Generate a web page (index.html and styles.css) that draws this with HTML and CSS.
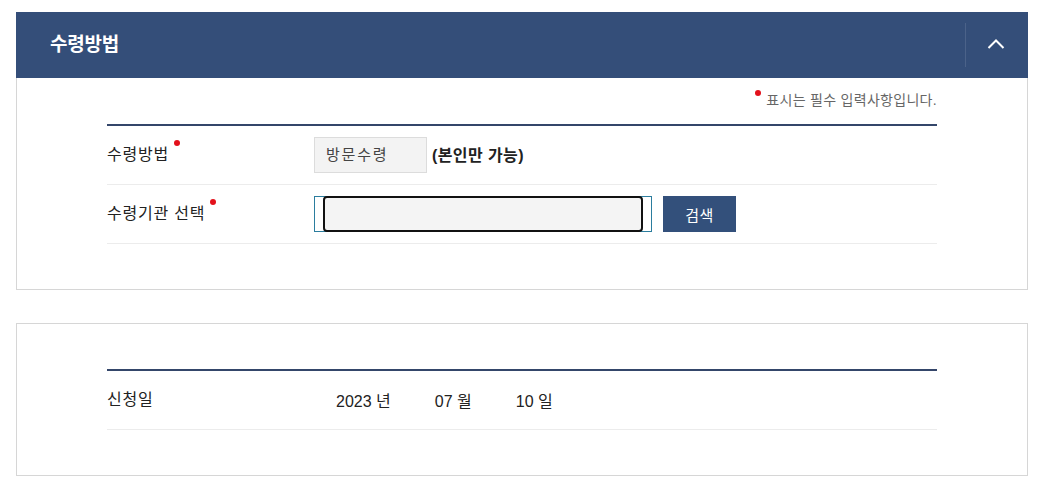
FILE: index.html
```html
<!DOCTYPE html>
<html lang="ko">
<head>
<meta charset="utf-8">
<title>수령방법</title>
<link rel="stylesheet" href="styles.css">
</head>
<body>
<div class="page">
  <section class="panel">
    <header class="panel-head">
      <h2 class="panel-title">수령방법</h2>
      <button class="toggle" type="button" aria-label="접기">
        <svg width="18" height="12" viewBox="0 0 18 12"><polyline points="1.5,10 9,2.5 16.5,10" fill="none" stroke="#fff" stroke-width="2"/></svg>
      </button>
    </header>
    <div class="panel-body body-first">
      <p class="note"><span class="req-dot"></span>표시는 필수 입력사항입니다.</p>
      <div class="form-table">
        <div class="row">
          <div class="label">수령방법<span class="req-dot sup"></span></div>
          <div class="value">
            <span class="readonly-box">방문수령</span>
            <strong class="hint">(본인만 가능)</strong>
          </div>
        </div>
        <div class="row">
          <div class="label">수령기관 선택<span class="req-dot sup"></span></div>
          <div class="value">
            <div class="input-frame"><div class="input-inner"></div></div>
            <button class="btn-search" type="button">검색</button>
          </div>
        </div>
      </div>
    </div>
  </section>

  <section class="panel panel-plain">
    <div class="panel-body body-top">
      <div class="form-table">
        <div class="row">
          <div class="label">신청일</div>
          <div class="value date">
            <span class="date-part">2023 년</span>
            <span class="date-part">07 월</span>
            <span class="date-part">10 일</span>
          </div>
        </div>
      </div>
    </div>
  </section>
</div>
</body>
</html>
```

FILE: styles.css
```css
* { box-sizing: border-box; }
html, body { margin: 0; padding: 0; background: #fff; }
body {
  font-family: "Liberation Sans", "Noto Sans CJK KR", sans-serif;
  color: #222;
}
.page {
  padding: 12px 0 0 16px;
  width: 1028px;
}
.panel { width: 1012px; }
.panel-head {
  height: 66px;
  background: #344e79;
  display: flex;
  align-items: center;
  justify-content: space-between;
  padding-left: 34px;
}
.panel-title {
  margin: 0;
  font-size: 19px;
  font-weight: 700;
  color: #fff;
  letter-spacing: -0.2px;
  line-height: 24px;
}
.toggle {
  width: 63px;
  height: 44px;
  border: 0;
  border-left: 1px solid #4b6289;
  background: transparent;
  padding: 0;
  display: flex;
  align-items: center;
  justify-content: center;
  cursor: pointer;
}
.toggle svg { display: block; margin-top: -2px; margin-left: -2px; }
.panel-body {
  border: 1px solid #d6d6d6;
  border-top: 0;
  padding: 0 90px 45px 90px;
}
.body-first { padding-top: 12px; }
.panel-plain { margin-top: 33px; }
.panel-plain .panel-body { border-top: 1px solid #d6d6d6; }
.body-top { padding-top: 45px; }
.note {
  margin: 0;
  text-align: right;
  font-size: 14px;
  line-height: 20px;
  color: #666;
  letter-spacing: 0.3px;
}
.req-dot {
  display: inline-block;
  width: 6px;
  height: 6px;
  border-radius: 50%;
  background: #e3111b;
  vertical-align: top;
  margin: 0 5px 0 0;
}
.req-dot.sup {
  margin: -4px 0 0 5px;
}
.form-table {
  margin-top: 14px;
  border-top: 2px solid #34466a;
}
.body-top .form-table { margin-top: 0; }
.row {
  display: flex;
  align-items: center;
  height: 59px;
  border-bottom: 1px solid #ececec;
}
.label {
  width: 207px;
  flex: none;
  font-size: 16px;
  line-height: 22px;
  color: #222;
  letter-spacing: 0.8px;
}
.value {
  display: flex;
  align-items: center;
}
.readonly-box {
  width: 113px;
  height: 36px;
  background: #f3f3f3;
  border: 1px solid #dcdcdc;
  padding-left: 11px;
  font-size: 15px;
  line-height: 34px;
  color: #444;
  letter-spacing: 1.8px;
}
.hint {
  margin-left: 5px;
  font-size: 16px;
  font-weight: 700;
  color: #222;
  letter-spacing: 0.4px;
  margin-top: -3px;
}
.input-frame {
  width: 338px;
  height: 36px;
  border: 1px solid #2b7d9e;
  padding: 0 8px;
  display: flex;
}
.input-inner {
  flex: 1;
  margin: -1px 0;
  border: 2px solid #111;
  border-radius: 4px;
  background: #f4f4f4;
}
.btn-search {
  margin-left: 11px;
  width: 73px;
  height: 36px;
  border: 0;
  background: #33507b;
  color: #fff;
  font-family: inherit;
  font-size: 15px;
  letter-spacing: 0.5px;
  padding: 0;
}
.date { padding-left: 22px; }
.date-part {
  font-size: 16px;
  color: #222;
  margin-right: 44px;
}
```
